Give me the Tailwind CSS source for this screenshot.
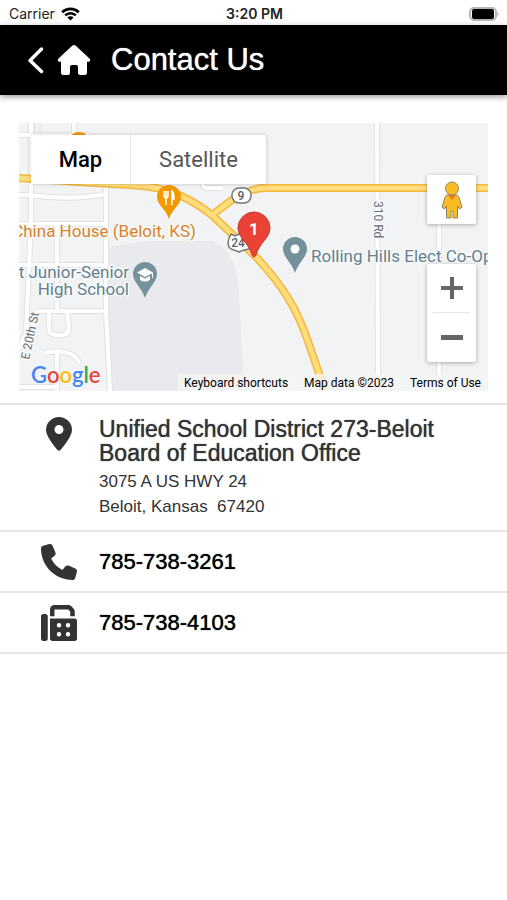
<!DOCTYPE html>
<html lang="en">
<head>
  <meta charset="UTF-8">
  <meta name="viewport" content="width=device-width, initial-scale=1">
  <title>Contact Us</title>
  <script src="https://cdn.jsdelivr.net/npm/@tailwindcss/browser@4"></script>
</head>

<body class="bg-white text-[#333] font-['Liberation_Sans',Arial,sans-serif] min-h-screen">

<!-- Status bar -->
<div class="grid grid-cols-3 items-center h-[25px] pl-[9px] pr-[7px] pt-[2px] text-[14px] font-['Inter',sans-serif] text-[#222]">
  <div class="flex items-center gap-[6px]">
    <span>Carrier</span>
    <svg class="w-[19px] h-[14px]" viewBox="0 0 19 14" fill="none" stroke="#000" stroke-width="2.6">
      <path d="M1.2 5.2a12 12 0 0 1 16.6 0"/>
      <path d="M4.2 8.4a7.6 7.6 0 0 1 10.6 0"/>
      <path d="M9.5 13.6 6.4 10.6a4.4 4.4 0 0 1 6.2 0z" fill="#000" stroke="none"/>
    </svg>
  </div>
  <div class="text-center font-semibold">3:20 PM</div>
  <svg class="justify-self-end w-[31px] h-[14px]" viewBox="0 0 31 14">
    <rect x="1" y="1" width="26" height="12" rx="4" fill="#fff" stroke="#b5b5b5" stroke-width="2"/>
    <rect x="3" y="2" width="22" height="10" rx="2" fill="#000"/>
    <path d="M28.500 4.500q2.500 2.500 0 5z" fill="#b5b5b5"/>
  </svg>
</div>

<!-- Header -->
<header class="flex items-center h-[70px] pl-[27px] bg-black text-white shadow-[0_2px_6px_rgba(0,0,0,0.4)]">
  <a href="#" aria-label="Back" class="mr-[13px]">
    <svg class="w-[17px] h-[28px]" viewBox="0 0 17 28" fill="none" stroke="#fff" stroke-width="3.5" stroke-linecap="round" stroke-linejoin="round"><path d="M14.500 3 3 14.500 14.500 25.500"/></svg>
  </a>
  <a href="#" aria-label="Home" class="mr-[20px]">
    <svg class="w-[34px] h-[30px]" viewBox="0 0 34 30" fill="#fff"><path d="M17 0q.8 0 1.500.6L32.500 13.500q1.200 1.200.6 2.300-.4.900-1.600.9H30V27.500Q30 30 27.500 30H23q-2 0-2-2v-6q0-2-2-2h-4q-2 0-2 2v6q0 2-2 2H6.500Q4 30 4 27.500V16.700H2.500q-1.200 0-1.600-.9-.6-1.100.6-2.300L15.500.6Q16.200 0 17 0z"/></svg>
  </a>
  <h1 class="text-[31px] leading-[36px] [text-shadow:0_0_1px_#fff]">Contact Us</h1>
</header>

<main>
  <!-- Map -->
  <section class="relative mt-[28px] mx-[19px] h-[268px] overflow-hidden bg-[#f1f3f4] font-['Roboto',sans-serif]">
    <svg class="w-full h-full" viewBox="0 0 469 268" preserveAspectRatio="xMidYMid slice" font-family="Roboto, sans-serif">
      <rect width="469" height="268" fill="#f1f3f4"/>
      <!-- School grounds -->
      <path d="M88 124 130 118H194Q206 124 212 136 219 148 220 170L225 268H91z" fill="#e8eaed"/>

      <!-- Local streets -->
      <g fill="none" stroke="#e0e2e4" stroke-width="6">
        <path d="M12 0V100L7 210 0 226M0 12H70M55 0V12M0 72H12Q50 78 87 71M87 60V188L91 268M38 100V188M0 101H87M0 142H87M18 188H87M30 188V206Q30 212 39 212H42Q50 212 50 205L48 188M0 264H36M38 268V229M26 230Q40 226 52 231 58 234 60 240"/>
        <path d="M358 0 359 268M420 98V268M184 60V62Q184 65 190 65H204"/>
      </g>
      <g fill="none" stroke="#fff" stroke-width="4">
        <path d="M12 0V100L7 210 0 226M0 12H70M55 0V12M0 72H12Q50 78 87 71M87 60V188L91 268M38 100V188M0 101H87M0 142H87M18 188H87M30 188V206Q30 212 39 212H42Q50 212 50 205L48 188M0 264H36M38 268V229M26 230Q40 226 52 231 58 234 60 240"/>
        <path d="M358 0 359 268M420 98V268M184 60V62Q184 65 190 65H204"/>
      </g>
      <path d="M16 0V11M21 0V11" stroke="#e0e2e4" stroke-width="1"/>

      <!-- Highways -->
      <g fill="none" stroke="#f5b73d" stroke-width="8" stroke-linejoin="round">
        <path d="M0 55 60 59 110 62Q140 63 160 72 178 80 194 93L236 133Q257 155 269 175 280 192 290 221L306 268"/>
        <path d="M193 92 213 77Q232 65 245 65H469"/>
      </g>
      <g fill="none" stroke="#ffdc7c" stroke-width="5" stroke-linejoin="round">
        <path d="M0 55 60 59 110 62Q140 63 160 72 178 80 194 93L236 133Q257 155 269 175 280 192 290 221L306 268"/>
        <path d="M193 92 213 77Q232 65 245 65H469"/>
      </g>
      <circle cx="60" cy="20" r="11" fill="#f29900"/>

      <!-- Route shields -->
      <g fill="#fff" stroke="#73787c" stroke-width="1.500">
        <rect x="213" y="65" width="19" height="15" rx="7"/>
        <path d="M212 111 216 113 220 111 224 113 229 113Q233 120 230 126L225 127 220 129 215 127Q209 126 209 120 209 116 212 111z"/>
      </g>
      <g fill="#5a5f63" font-size="12" font-weight="500" text-anchor="middle">
        <text x="222" y="77">9</text>
        <text x="219" y="124">24</text>
      </g>

      <!-- Restaurant pin -->
      <path d="M150 62a12 12 0 0 1 12 12c0 8-9 12-12 22-3-10-12-14-12-22a12 12 0 0 1 12-12z" fill="#f29900"/>
      <path d="M145 68V72Q145 75 147 75V82M149 68V72Q149 75 147 75M147 68V74" fill="none" stroke="#fff" stroke-width="1.500"/>
      <path d="M153 82V68Q155 69 155 76H153" fill="#fff" stroke="#fff" stroke-width="1.500"/>
      <!-- School pin -->
      <path d="M126 139a12 12 0 0 1 12 12c0 8-9 14-12 24-3-10-12-16-12-24a12 12 0 0 1 12-12z" fill="#74919c"/>
      <path d="M126 145 134 149.500V155H133V150.500L126 154 118 149.500zM121 153 126 155.500 131 153V157Q126 160 121 157z" fill="#fff"/>
      <!-- Business pin -->
      <path d="M276 114a12 12 0 0 1 12 12c0 8-9 14-12 24-3-10-12-16-12-24a12 12 0 0 1 12-12z" fill="#74919c"/>
      <circle cx="276" cy="126" r="4.500" fill="#fff"/>
      <!-- Office marker -->
      <path d="M235 89a16 16 0 0 1 16 16c0 10-11 15-14 27q-2 4-4 0c-3-12-14-17-14-27a16 16 0 0 1 16-16z" fill="#ea4335" stroke="#c5372c" stroke-width="1"/>
      <text x="235" y="112" fill="#fff" font-size="17" font-weight="700" text-anchor="middle">1</text>

      <!-- Place names -->
      <g font-size="17" stroke="#f8f9fa" stroke-width="3" stroke-linejoin="round" paint-order="stroke">
        <text x="177" y="114" text-anchor="end" fill="#d9822b">China House (Beloit, KS)</text>
        <g fill="#64808d" text-anchor="end">
          <text x="110" y="155">t Junior-Senior</text>
          <text x="110" y="172">High School</text>
        </g>
        <text x="292" y="139" fill="#64808d">Rolling Hills Elect Co-Op</text>
      </g>
      <g font-size="12" fill="#666b70" stroke="#f8f9fa" stroke-width="3" paint-order="stroke">
        <text transform="translate(355 78) rotate(90)">310 Rd</text>
        <text transform="translate(10 237) rotate(-78)">E 20th St</text>
      </g>
    </svg>

    <!-- Map controls -->
    <div class="absolute left-[12px] top-[12px] flex h-[49px] bg-white rounded-[2px] text-[22px] shadow-[0_0_4px_rgba(0,0,0,0.2)]">
      <button type="button" class="w-[99px] font-medium text-black">Map</button>
      <button type="button" class="w-[136px] border-l border-[#e6e6e6] text-[#565656]">Satellite</button>
    </div>
    <button type="button" aria-label="Street View" class="absolute right-[12px] top-[52px] flex items-center justify-center size-[49px] bg-white rounded-[2px] shadow-[0_1px_4px_rgba(0,0,0,0.3)]">
      <svg class="w-[22px] h-[38px]" viewBox="0 0 22 38" fill="#fbbc22" stroke="#8b8768" stroke-width="1">
        <path d="M6 14H16Q18 15 18.500 18L21 26 18.500 28 16.500 25V37H12V30H10V37H5.500V25L3.500 28 1 26 3.500 18Q4 15 6 14z"/>
        <path d="M7 13.500H15L11 19z" fill="#e8752b" stroke="none"/>
        <circle cx="11" cy="7.500" r="6.500"/>
      </svg>
    </button>
    <div class="absolute right-[12px] top-[141px] flex flex-col items-center w-[49px] bg-white rounded-[2px] shadow-[0_1px_4px_rgba(0,0,0,0.3)]">
      <button type="button" aria-label="Zoom in" class="flex items-center justify-center w-full h-[48px]">
        <svg class="size-[22px]" viewBox="0 0 22 22" fill="#666"><path d="M9 0h4v9h9v4h-9v9H9v-9H0V9h9z"/></svg>
      </button>
      <div class="w-[37px] h-px bg-[#e6e6e6]"></div>
      <button type="button" aria-label="Zoom out" class="flex items-center justify-center w-full h-[49px]">
        <svg class="size-[22px]" viewBox="0 0 22 22" fill="#666"><path d="M0 8h22v5H0z"/></svg>
      </button>
    </div>

    <!-- Attribution -->
    <a href="#" class="absolute left-[12px] bottom-[1px] font-['Lato',sans-serif] text-[22px] leading-[30px] font-semibold [text-shadow:0_0_2px_#fff]"><span class="text-[#4285f4]">G</span><span class="text-[#ea4335]">o</span><span class="text-[#fbbc05]">o</span><span class="text-[#4285f4]">g</span><span class="text-[#34a853]">l</span><span class="text-[#ea4335]">e</span></a>
    <div class="absolute right-0 bottom-0 flex gap-[16px] h-[17px] pl-[6px] pr-[7px] bg-[#f5f5f5]/80 text-[12px] leading-[18px] text-black whitespace-nowrap">
      <button type="button">Keyboard shortcuts</button>
      <span>Map data ©2023</span>
      <a href="#">Terms of Use</a>
    </div>
  </section>

  <!-- Contact details -->
  <ul class="mt-[12px] border-t-2 border-[#e5e5e5]">
    <li class="flex h-[127px] border-b-2 border-[#e5e5e5]">
      <div class="flex justify-center w-[36px] ml-[41px] mr-[22px] pt-[12px]">
        <svg class="w-[26px] h-[34px]" viewBox="0 0 26 34" fill="#333"><path fill-rule="evenodd" d="M13 0A13 13 0 0 1 26 13C26 19 18 29 14.500 33Q13 34.500 11.500 33C8 29 0 19 0 13A13 13 0 0 1 13 0zM13 8a4.500 4.500 0 1 0 0 9 4.500 4.500 0 0 0 0-9z"/></svg>
      </div>
      <div class="flex-1 pt-[12px] pr-4">
        <h2 class="text-[23px] leading-[24px] [text-shadow:0_0_1px_#333]">Unified School District 273-Beloit<br>Board of Education Office</h2>
        <p class="mt-[4px] text-[17px] leading-[25px]">3075 A US HWY 24<br>Beloit, Kansas&nbsp; 67420</p>
      </div>
    </li>
    <li class="flex items-center h-[61px] border-b-2 border-[#e5e5e5]">
      <svg class="w-[36px] h-[36px] ml-[41px] mr-[22px]" viewBox="0 0 512 512" fill="#333"><path d="M164.900 24.600c-7.700-18.600-28-28.500-47.400-23.200l-88 24C12.100 30.200 0 46 0 64C0 311.400 200.600 512 448 512c18 0 33.800-12.100 38.600-29.500l24-88c5.300-19.400-4.600-39.700-23.200-47.400l-96-40c-16.300-6.800-35.200-2.100-46.300 11.600L304.700 368C234.300 334.700 177.300 277.700 144 207.300L193.300 167c13.700-11.200 18.400-30 11.600-46.300l-40-96z"/></svg>
      <a href="tel:7857383261" class="text-[22px] leading-[26px] text-black [text-shadow:0_0_1px_#000]">785-738-3261</a>
    </li>
    <li class="flex items-center h-[61px] border-b-2 border-[#e5e5e5]">
      <svg class="w-[36px] h-[36px] ml-[41px] mr-[22px]" viewBox="0 0 512 512" fill="#333"><path d="M128 64v96h64V64H386.700L416 93.300V160h64V93.300c0-17-6.700-33.300-18.700-45.300L432 18.700C420 6.700 403.700 0 386.700 0H192c-35.300 0-64 28.700-64 64zM0 160V480c0 17.700 14.300 32 32 32H64c17.700 0 32-14.300 32-32V160c0-17.700-14.300-32-32-32H32c-17.700 0-32 14.300-32 32zm480 32H128V480c0 17.700 14.300 32 32 32H480c17.700 0 32-14.300 32-32V224c0-17.700-14.300-32-32-32zM256 256a32 32 0 1 1 0 64 32 32 0 1 1 0-64zm96 32a32 32 0 1 1 64 0 32 32 0 1 1-64 0zm32 96a32 32 0 1 1 0 64 32 32 0 1 1 0-64zM224 416a32 32 0 1 1 64 0 32 32 0 1 1-64 0z"/></svg>
      <a href="tel:7857384103" class="text-[22px] leading-[26px] text-black [text-shadow:0_0_1px_#000]">785-738-4103</a>
    </li>
  </ul>
</main>

</body>
</html>
